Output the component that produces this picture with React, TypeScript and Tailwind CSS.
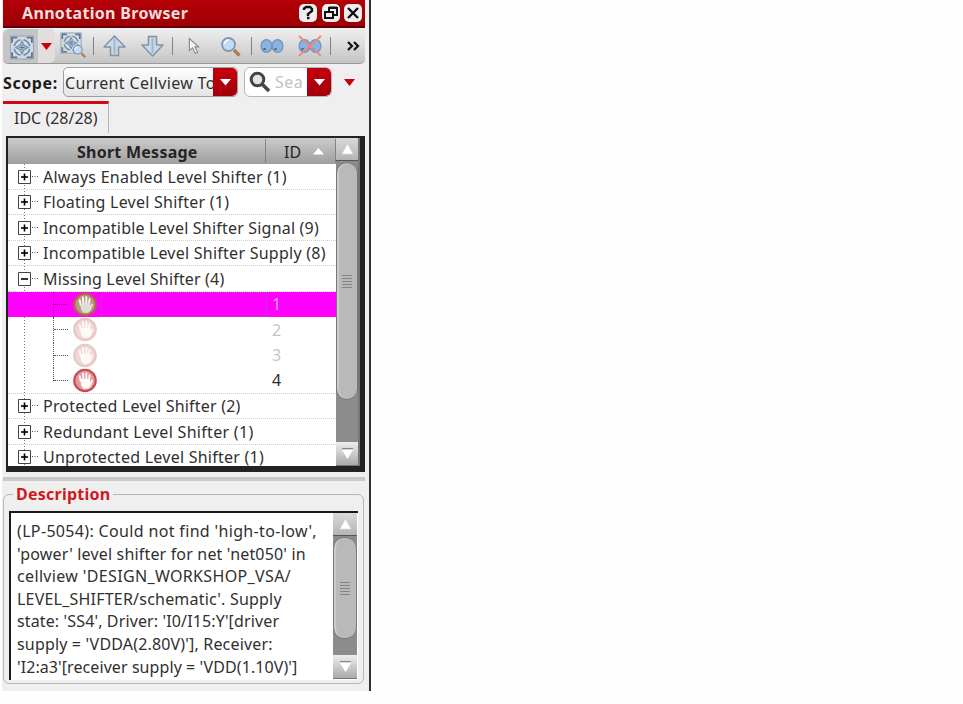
import React from "react";

type Row = { label?: string; spacing?: string; id?: string; tone?: "selected" | "faded" | "active" };

const rows: Row[] = [
  { label: "Always Enabled Level Shifter (1)", spacing: "tracking-[0.25px]" },
  { label: "Floating Level Shifter (1)", spacing: "tracking-[0.24px]" },
  { label: "Incompatible Level Shifter Signal (9)", spacing: "tracking-[0.2px]" },
  { label: "Incompatible Level Shifter Supply (8)", spacing: "tracking-[0.25px]" },
  { label: "Missing Level Shifter (4)", spacing: "tracking-[0.17px]" },
  { id: "1", tone: "selected" },
  { id: "2", tone: "faded" },
  { id: "3", tone: "faded" },
  { id: "4", tone: "active" },
  { label: "Protected Level Shifter (2)", spacing: "tracking-[0.2px]" },
  { label: "Redundant Level Shifter (1)", spacing: "tracking-[0.3px]" },
  { label: "Unprotected Level Shifter (1)", spacing: "tracking-[0.25px]" },
];

const description = [
  { text: "(LP-5054): Could not find 'high-to-low',", spacing: "tracking-[0.34px]" },
  { text: "'power' level shifter for net 'net050' in", spacing: "tracking-[0.17px]" },
  { text: "cellview 'DESIGN_WORKSHOP_VSA/", spacing: "tracking-[0.35px]" },
  { text: "LEVEL_SHIFTER/schematic'. Supply", spacing: "tracking-[0.21px]" },
  { text: "state: 'SS4', Driver: 'I0/I15:Y'[driver", spacing: "tracking-[0.13px]" },
  { text: "supply = 'VDDA(2.80V)'], Receiver:", spacing: "tracking-[0.17px]" },
  { text: "'I2:a3'[receiver supply = 'VDD(1.10V)']", spacing: "tracking-[0.08px]" },
];

function Target() {
  return (
    <g fill="none" stroke="#5d7893" strokeWidth="1.8">
      <rect x="1" y="1" width="22" height="22" fill="#d3dae1" stroke="#93a5b7" strokeWidth="1" />
      <path d="M2.5 7.5v-5h5M16.5 2.5h5v5M21.5 16.5v5h-5M7.5 21.5h-5v-5" />
      <path d="M4.5 10.5c1-3.5 2.500-5 6-6M13.500 4.500c3.500 1 5 2.500 6 6M19.500 13.500c-1 3.500-2.500 5-6 6M10.500 19.500c-3.500-1-5-2.500-6-6" stroke="#6f8aa5" strokeWidth="1.6" />
      <path d="M12 6l2 4 4 2-4 2-2 4-2-4-4-2 4-2z" fill="#a9c6e4" strokeWidth="1.2" stroke="#7893ae" />
      <path d="M12 9.500v5M9.500 12h5" strokeWidth="1" />
    </g>
  );
}

function Lens() {
  return (
    <>
      <path d="M14 14l5.5 5.5" stroke="#b07850" strokeWidth="3.2" />
      <circle cx="8.5" cy="8.5" r="6.5" fill="#c3dcf5" stroke="#8296ac" strokeWidth="1.8" />
      <path d="M4.5 8a4 4 0 0 1 4-4" fill="none" stroke="#fff" strokeWidth="1.5" />
    </>
  );
}

function Eyes({ crossed = false }: { crossed?: boolean }) {
  return (
    <svg className="h-[22px] w-[26px] shrink-0" viewBox="0 0 26 22">
      <ellipse cx="7.5" cy="11" rx="5.4" ry="6.3" fill="#86b4e6" stroke="#7594b8" strokeWidth="1.3" />
      <ellipse cx="18.5" cy="11" rx="5.4" ry="6.3" fill="#86b4e6" stroke="#7594b8" strokeWidth="1.3" />
      <path d="M4.500 14h2M15.500 14h2" stroke="#3f5c80" strokeWidth="1.800" />
      {crossed && <path d="M2 1l22 20M24 1L2 21" stroke="#f08580" strokeWidth="1.7" />}
    </svg>
  );
}

function Arrow({ down = false }: { down?: boolean }) {
  return (
    <svg className={"h-[24px] w-[25px] shrink-0 " + (down ? "rotate-180" : "")} viewBox="0 0 25 24">
      <path d="M12.5 2L23 13h-6.500v8.5h-8V13H2z" fill="#c9d9e8" stroke="#8194a6" strokeWidth="1.5" strokeLinejoin="round" />
      <path d="M12.5 5v15" stroke="#a1b9cf" strokeWidth="2" />
    </svg>
  );
}

function DropButton() {
  return (
    <div className="flex h-full w-6 shrink-0 items-center justify-center rounded-r-[5px] bg-linear-to-b from-[#c4000d] to-[#a3000a]">
      <svg className="h-[7px] w-[11px]" viewBox="0 0 11 7"><path d="M0 0h11L5.5 6.5z" fill="#fff" /></svg>
    </div>
  );
}

function WindowButton({ children }: { children: React.ReactNode }) {
  return (
    <div className="h-[18px] w-[18px] rounded-[5px] bg-[#f0eeee] shadow-[0_0_1px_#630000]">
      <svg className="h-[18px] w-[18px]" viewBox="0 0 18 18" fill="none" stroke="#111" strokeWidth="2">{children}</svg>
    </div>
  );
}

function Expander({ open }: { open: boolean }) {
  return (
    <svg className="h-[14px] w-[21px] shrink-0" viewBox="0 0 21 14">
      <path d="M1.500 .5h12v13h-12z" fill="#fff" stroke="#444" strokeWidth="1" />
      <path d="M4 7h7" stroke="#000" strokeWidth="1.6" />
      {!open && <path d="M7.500 3.500v7" stroke="#000" strokeWidth="1.6" />}
      <path d="M15 6.5h6" stroke="#555" strokeDasharray="1 1.5" />
    </svg>
  );
}

function Hand({ tone }: { tone: "selected" | "faded" | "active" }) {
  const ring = tone === "active" ? "#c94a50" : tone === "selected" ? "#b8604e" : "#e6c8c6";
  const disc = tone === "active" ? "#e29a9a" : tone === "selected" ? "#b39a85" : "#f0d8d5";
  return (
    <svg className="h-[25px] w-[26px] shrink-0" viewBox="0 0 26 26">
      <circle cx="13" cy="13" r="11.2" fill={disc} stroke={ring} strokeWidth="2.2" />
      <path d="M8.500 13.500L7.500 8.500M11.4 12L10.800 5.7M14.4 12V5.500M17.3 13L17.700 7.5" stroke="#fffafa" strokeWidth="2" strokeLinecap="round" />
      <path d="M8 11.500h10.300v3l1.700-2.500 1.600.8-2.600 6.200-2.500 2.500h-5l-2.500-3z" fill={tone === "selected" ? "#deded6" : "#fffafa"} />
    </svg>
  );
}

function ScrollBar({ thumb, track }: { thumb: string; track: string }) {
  return (
    <div className={"flex shrink-0 flex-col bg-[#8c8c8c] " + track}>
      <div className="flex h-[23px] shrink-0 items-center justify-center border-b border-[#555] bg-linear-to-b from-[#d9d9d9] to-[#b4b4b4]">
        <svg className="h-[12px] w-[13px]" viewBox="0 0 13 12"><path d="M6.5 1L12 11H1z" fill="#fff" stroke="#ddd" strokeWidth=".7" /></svg>
      </div>
      <div className={"mt-px flex shrink-0 flex-col items-center justify-center gap-[2px] rounded-[11px] border border-[#777] bg-[#b9b9b9] shadow-[inset_2px_0_1px_#ccc] " + thumb}>
        {[0, 1, 2, 3, 4].map((i) => <div key={i} className="h-px w-[10px] bg-[#858585]" />)}
      </div>
      <div className="mt-auto flex h-[24px] shrink-0 items-center justify-center border-b border-[#777] bg-linear-to-b from-[#eee] to-[#aaa]">
        <svg className="h-[13px] w-[13px]" viewBox="0 0 13 13"><path d="M1 3h11L6.5 12z" fill="#fff" /><path d="M1 1.5h11" stroke="#888" /></svg>
      </div>
    </div>
  );
}

function ToolSeparator() {
  return <div className="h-[18px] w-px shrink-0 bg-[#808080]" />;
}

function Header() {
  return (
    <div className="flex h-[26px] shrink-0 items-center bg-linear-to-b from-[#cbcbcb] via-[#b5b5b5] to-[#9f9f9f] text-[#242424]">
      <div className="w-[257px] pt-px pl-[69px] text-[16px] font-bold tracking-[0.25px]">Short Message</div>
      <div className="flex h-[24px] flex-1 items-center border-r border-l border-r-[#838383] border-l-[#838383] pl-[18px]">
        <span className="pt-px">ID</span>
        <svg className="ml-[12px] h-[7px] w-[11px]" viewBox="0 0 11 7"><path d="M0 6.5h11L5.5 0z" fill="#fff" /></svg>
      </div>
    </div>
  );
}

function TreeRow({ row, last }: { row: Row; last: boolean }) {
  if (row.label) {
    return (
      <div className={"flex shrink-0 items-center pl-[9px] whitespace-nowrap " + (last ? "h-[21px] pt-[4px] leading-[17px]" : "h-[25.5px] border-b border-dotted border-[#cfcfcf] pt-px")}>
        <Expander open={row.label.startsWith("Missing")} />
        <span className={"pl-[5px] " + row.spacing}>{row.label}</span>
      </div>
    );
  }
  const tone = row.tone || "faded";
  return (
    <div className={"flex h-[25.5px] shrink-0 items-center " + (tone === "selected" ? "bg-[#ff00ff]" : tone === "active" ? "border-b border-dotted border-[#cfcfcf]" : "")}>
      <div className={"ml-[45px] flex w-[19px] shrink-0 border-l border-dotted " + (tone === "selected" ? "border-[#8a008a] " : "border-[#555] ") + (tone === "active" ? "h-[13px] items-end self-start" : "h-full items-center")}>
        <div className={"w-[14px] border-t border-dotted " + (tone === "selected" ? "border-[#a000a0]" : "border-[#555]")} />
      </div>
      <Hand tone={tone} />
      <div className={"ml-[3px] h-[25px] w-[166px] shrink-0 " + (tone === "selected" ? "border border-dotted border-[#98609b]" : "")} />
      <span className={"pl-[5px] " + (tone === "selected" ? "text-[#e7a5e7]" : tone === "faded" ? "text-[#c5c5c5]" : "text-[#292929]")}>{row.id}</span>
    </div>
  );
}

export default function App() {
  return (
    <div className="h-[704px] w-[963px] overflow-hidden bg-[#fefefe] font-['Noto_Sans','Open_Sans',sans-serif] text-[16px] leading-[22px] text-[#303030]">
      <div className="flex h-[691px] w-[371px] flex-col border-r-2 border-[#333] bg-[#f0efef] bg-[linear-gradient(to_right,#fefefe_2px,transparent_2px)] pr-[4px] pl-[3px]">
        <div className="flex h-[28px] shrink-0 items-center border-b-2 border-[#620008] bg-linear-to-b from-[#b50007] to-[#9d0005] pl-[19px]">
          <span className="text-[16px] font-bold tracking-[0.33px] text-[#f4dddd]">Annotation Browser</span>
          <div className="mr-[3px] ml-auto flex gap-[4.5px]">
            <WindowButton><path d="M5 6V4.5L7 3h4l2 2v2l-4 3v2" strokeWidth="2.4" /><path d="M8 14h2.5" strokeWidth="2.4" /></WindowButton>
            <WindowButton><path d="M7 7V4h8v7h-4M3 8h8v6H3zM7 3.5h8M3 8h8" /></WindowButton>
            <WindowButton><path d="M4 4l10 10M14 4L4 14" strokeWidth="2.4" /></WindowButton>
          </div>
        </div>

        <div className="mt-[1px] flex h-[35px] shrink-0 items-center rounded-b-[5px] border-b border-[#999] bg-linear-to-b from-[#eee] via-[#dadada] to-[#c4c4c4]">
          <div className="flex h-full w-[52px] shrink-0 overflow-hidden rounded-[6px] bg-[#c5c5c5]">
            <svg className="mt-[6px] ml-[6px] h-[25px] w-[26px] shrink-0" viewBox="0 0 24 24"><Target /></svg>
            <div className="ml-[3px] flex w-[17px] items-center justify-center bg-[#e2dede]"><svg className="h-[7px] w-[11px]" viewBox="0 0 11 7"><path d="M0 0h11L5.5 7z" fill="#c9000b" /></svg></div>
          </div>
          <svg className="-mt-[2px] ml-[5px] h-[26px] w-[27px] shrink-0" viewBox="0 0 27 26"><g transform="scale(.92)"><Target /></g><g transform="translate(12 12) scale(.68)"><Lens /></g></svg>
          <div className="ml-[6px]"><ToolSeparator /></div>
          <div className="ml-[8px]"><Arrow /></div>
          <div className="ml-[13px]"><Arrow down /></div>
          <div className="ml-[7px]"><ToolSeparator /></div>
          <svg className="ml-[15px] h-[18px] w-[12px] shrink-0" viewBox="0 0 13 18"><path d="M1.5 1v13L5 11l3 6 2.5-1.3-3-5.7h4z" fill="#f5f5f5" stroke="#888" strokeWidth="1.2" /></svg>
          <svg className="ml-[20px] h-[21px] w-[21px] shrink-0" viewBox="0 0 21 21"><Lens /></svg>
          <div className="ml-[10px]"><ToolSeparator /></div>
          <div className="ml-[7px]"><Eyes /></div>
          <div className="ml-[12px]"><Eyes crossed /></div>
          <div className="ml-[7px]"><ToolSeparator /></div>
          <svg className="ml-[16px] h-[10px] w-[13px] shrink-0" viewBox="0 0 13 10"><path d="M1 1l4 4-4 4M7 1l4 4-4 4" fill="none" stroke="#111" strokeWidth="2.2" /></svg>
        </div>

        <div className="mt-[2px] flex h-[32px] shrink-0 items-center">
          <span className="w-[60px] shrink-0 pt-px text-[16px] font-bold tracking-[0.6px] text-[#1b1b1b]">Scope:</span>
          <div className="flex h-[30px] w-[175px] shrink-0 items-center overflow-hidden rounded-[5px] border border-[#9e9e9e] bg-linear-to-b from-white to-[#e4e4e4]">
            <div className="w-[149px] shrink-0 overflow-hidden pt-px pl-[1px] tracking-[0.34px] whitespace-nowrap">Current Cellview To</div><DropButton />
          </div>
          <div className="ml-[6px] flex h-[30px] w-[88px] shrink-0 items-center overflow-hidden rounded-[6px] border border-[#b5b5b5] bg-white">
            <svg className="ml-[4px] h-[22px] w-[22px] shrink-0" viewBox="0 0 22 22"><circle cx="8.5" cy="8.5" r="6.3" fill="#e3e3e3" stroke="#454545" strokeWidth="3" /><path d="M13 13l7 7" stroke="#454545" strokeWidth="3.5" /></svg>
            <span className="ml-[4px] w-[32px] shrink-0 overflow-hidden tracking-[0.5px] text-[#c2c2c2]">Sea</span><DropButton />
          </div>
          <svg className="ml-[12px] h-[7px] w-[11px] shrink-0" viewBox="0 0 11 7"><path d="M0 0h11L5.5 7z" fill="#c9000b" /></svg>
        </div>

        <div className="mt-[3px] flex h-[32px] w-[106px] shrink-0 items-center border-t-[3px] border-r border-t-[#d10818] border-r-[#b5b5b5] pl-[11px]">
          <span className="-mt-px">IDC (28/28)</span>
        </div>

        <div className="mt-[3px] ml-[3px] flex h-[336px] w-[359px] shrink-0 border-t-2 border-r-[5px] border-b-[6px] border-l-2 border-[#222]">
          <div className="flex h-full w-[328px] shrink-0 flex-col overflow-hidden bg-white">
            <Header />
            <div className="flex flex-1 flex-col overflow-hidden bg-[linear-gradient(to_bottom,#777_1px,transparent_1px)] bg-[length:1px_3px] bg-[position:16px_0] bg-repeat-y">
              {rows.map((row, index) => <TreeRow key={index} row={row} last={index === rows.length - 1} />)}
            </div>
          </div>
          <ScrollBar track="h-full w-[24px] border-r-2 border-r-[#777]" thumb="h-[238px]" />
        </div>

        <div className="mt-[5px] h-[4px] shrink-0 bg-[#c9c9c9]" />

        <fieldset className="mt-[2px] h-[201px] w-[361px] shrink-0 rounded-[6px] border border-[#b7b7b7] pl-[5px]">
          <legend className="ml-[4px] px-[3px] text-[16px] font-bold tracking-[0.25px] text-[#cf1820]">Description</legend>
          <div className="mt-[6px] flex h-[169px] w-[349px] border-t-2 border-l-2 border-[#1a1a1a] bg-white">
            <div className="w-[322px] shrink-0 pt-[7px] pl-[6px] leading-[22.6px] whitespace-nowrap">
              {description.map((line) => <div key={line.text} className={line.spacing}>{line.text}</div>)}
            </div>
            <ScrollBar track="h-[166px] w-[24px]" thumb="h-[102px]" />
          </div>
        </fieldset>
      </div>
    </div>
  );
}
